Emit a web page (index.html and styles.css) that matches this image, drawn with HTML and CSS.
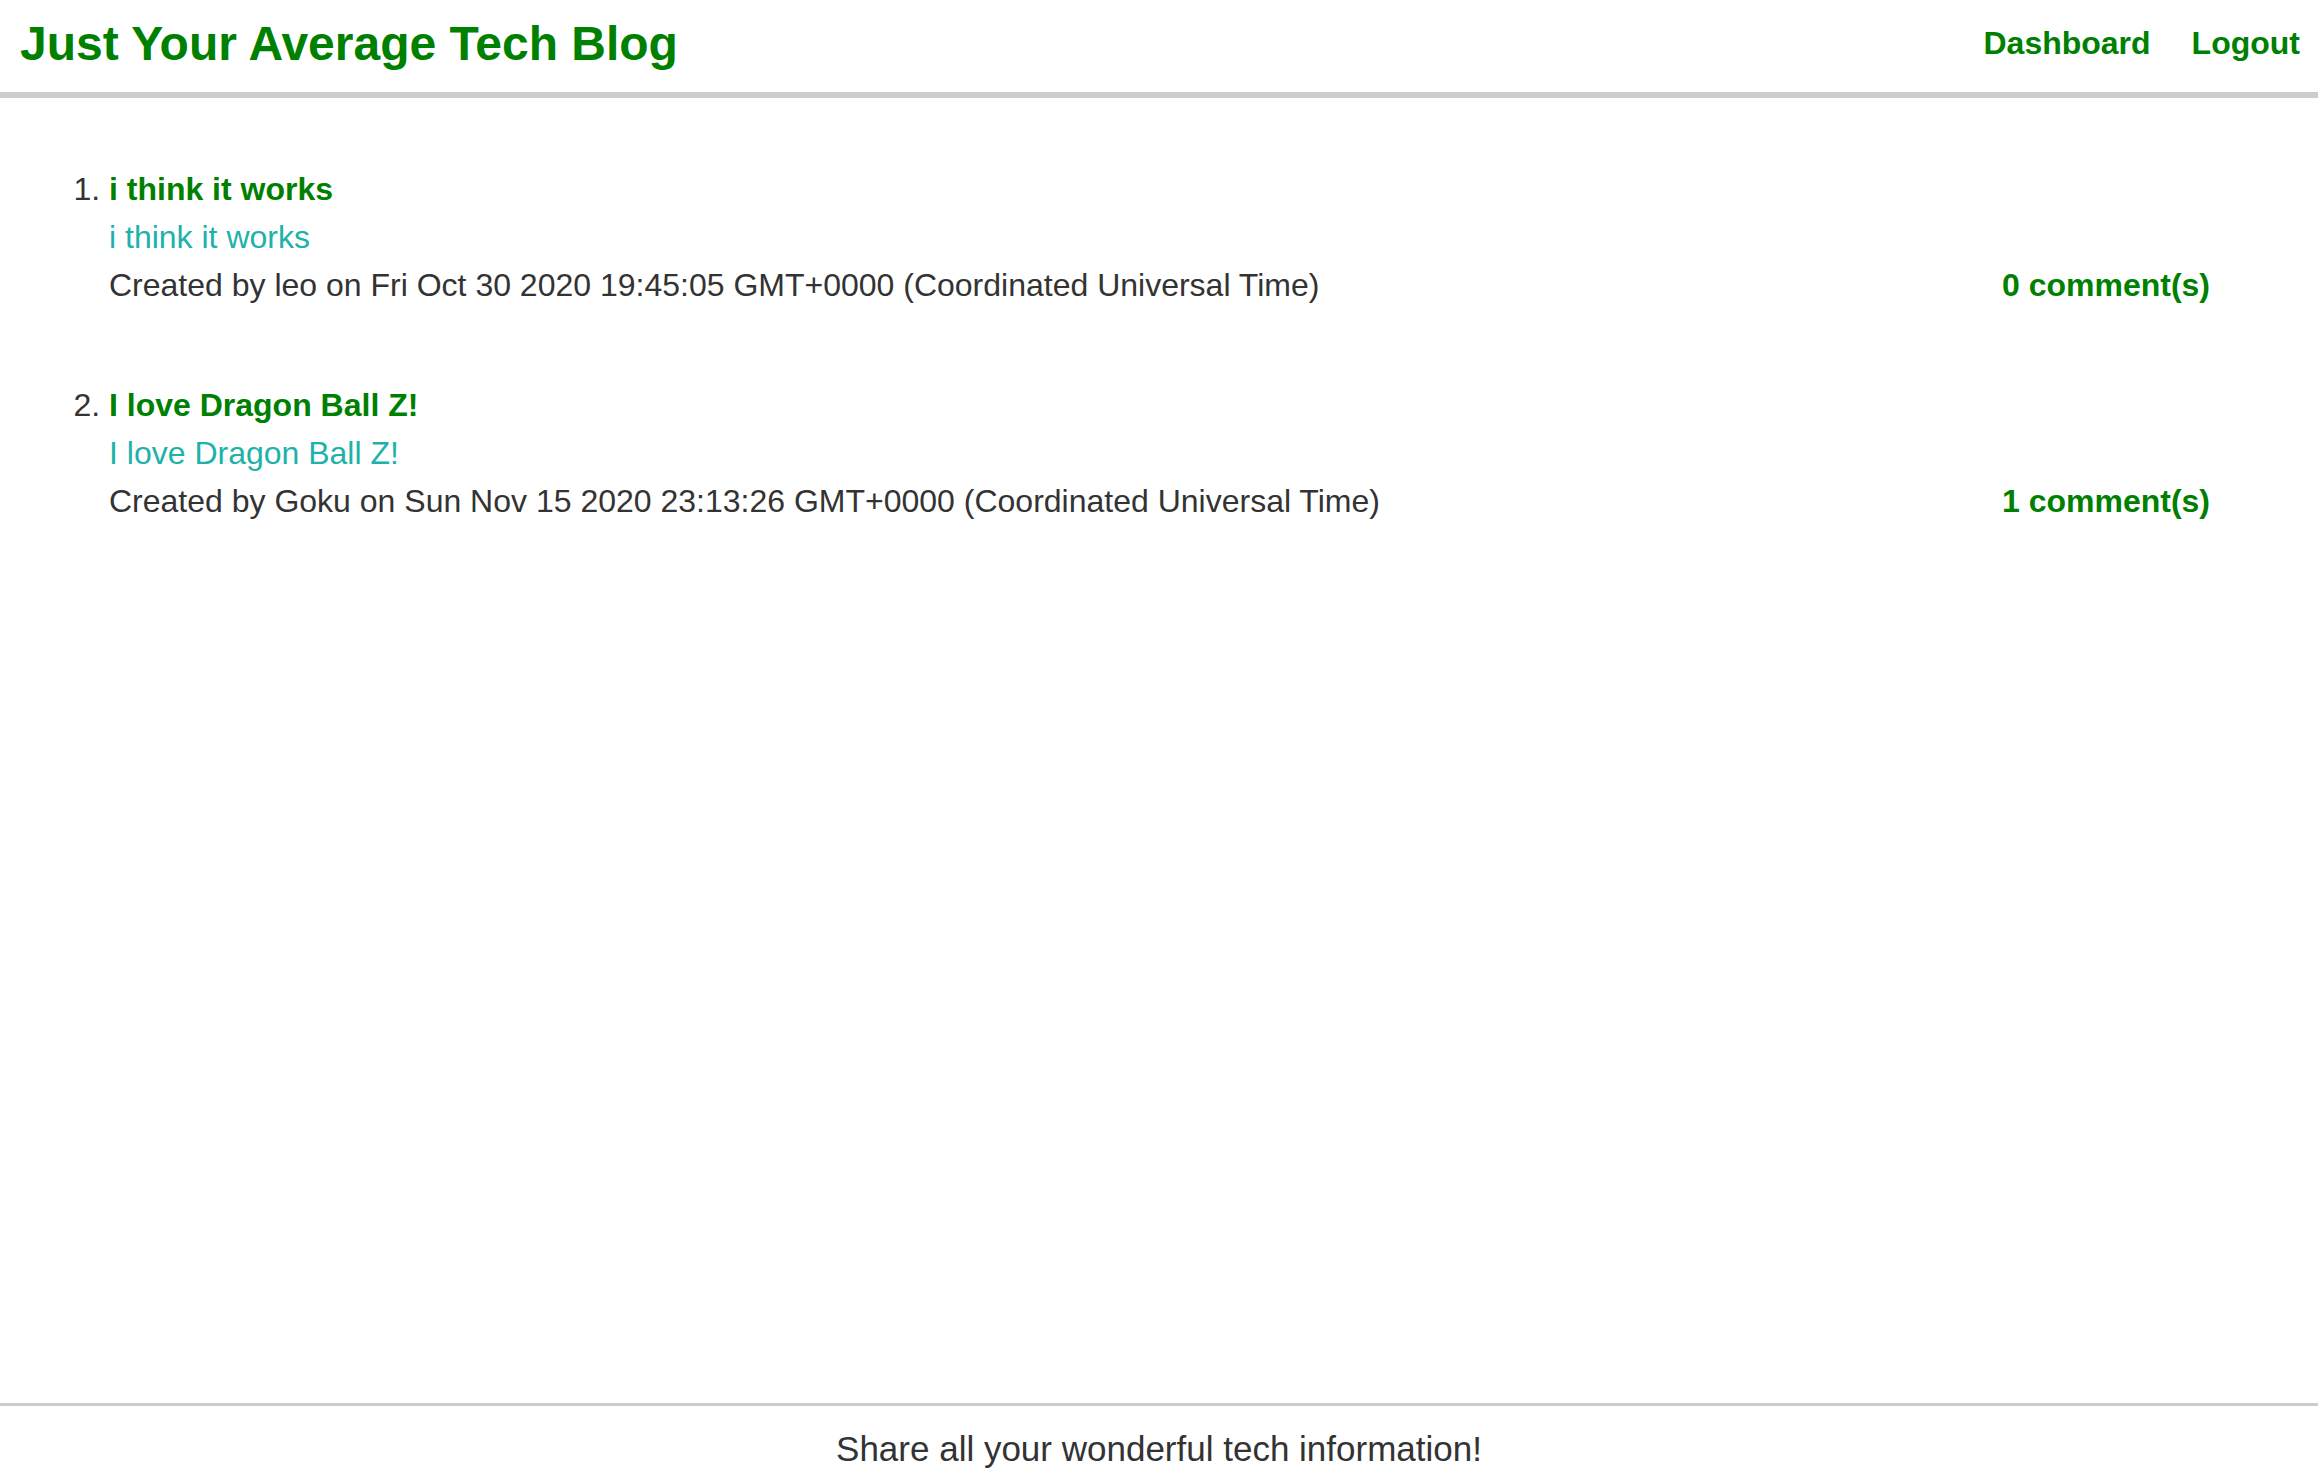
FILE: index.html
```html
<!DOCTYPE html>
<html lang="en">
<head>
<meta charset="utf-8">
<title>Just Your Average Tech Blog</title>
<link rel="stylesheet" href="styles.css">
</head>
<body>
<header class="site-header">
  <a class="brand" href="#">Just Your Average Tech Blog</a>
  <nav class="nav">
    <a class="nav-link" href="#">Dashboard</a>
    <a class="nav-link" href="#">Logout</a>
  </nav>
</header>
<main class="content">
  <ol class="post-list">
    <li class="post">
      <a class="post-title" href="#">i think it works</a>
      <div class="post-body">i think it works</div>
      <div class="post-meta">
        <span class="post-by">Created by leo on Fri Oct 30 2020 19:45:05 GMT+0000 (Coordinated Universal Time)</span>
        <a class="post-comments" href="#">0 comment(s)</a>
      </div>
    </li>
    <li class="post">
      <a class="post-title" href="#">I love Dragon Ball Z!</a>
      <div class="post-body">I love Dragon Ball Z!</div>
      <div class="post-meta">
        <span class="post-by">Created by Goku on Sun Nov 15 2020 23:13:26 GMT+0000 (Coordinated Universal Time)</span>
        <a class="post-comments" href="#">1 comment(s)</a>
      </div>
    </li>
  </ol>
</main>
<footer class="site-footer">Share all your wonderful tech information!</footer>
</body>
</html>
```

FILE: styles.css
```css
html, body {
  margin: 0;
  padding: 0;
}

body {
  font-family: "Liberation Sans", Arial, Helvetica, sans-serif;
  color: #333333;
  background: #ffffff;
  min-height: 100vh;
  display: flex;
  flex-direction: column;
}

a {
  text-decoration: none;
}

.site-header {
  height: 86px;
  display: flex;
  align-items: center;
  justify-content: space-between;
  padding: 0 18px 6px 20px;
  border-bottom: 6px solid #cccccc;
}

.brand {
  font-size: 48px;
  font-weight: bold;
  color: #008000;
}

.nav {
  display: flex;
  gap: 41px;
}

.nav-link {
  font-size: 32px;
  font-weight: bold;
  color: #008000;
}

.content {
  flex: 1;
  padding: 67px 108px 0 70px;
}

.post-list {
  margin: 0;
  padding: 0 0 0 39px;
  font-size: 32px;
  line-height: 48px;
}

.post {
  margin-bottom: 72px;
}

.post-title {
  display: block;
  font-weight: bold;
  color: #008000;
}

.post-body {
  color: #20b2aa;
}

.post-meta {
  display: flex;
  justify-content: space-between;
}

.post-comments {
  font-weight: bold;
  color: #008000;
}

.site-footer {
  border-top: 3px solid #cccccc;
  text-align: center;
  font-size: 35px;
  line-height: 54px;
  padding: 16px 0 6px;
  color: #333333;
}
```
